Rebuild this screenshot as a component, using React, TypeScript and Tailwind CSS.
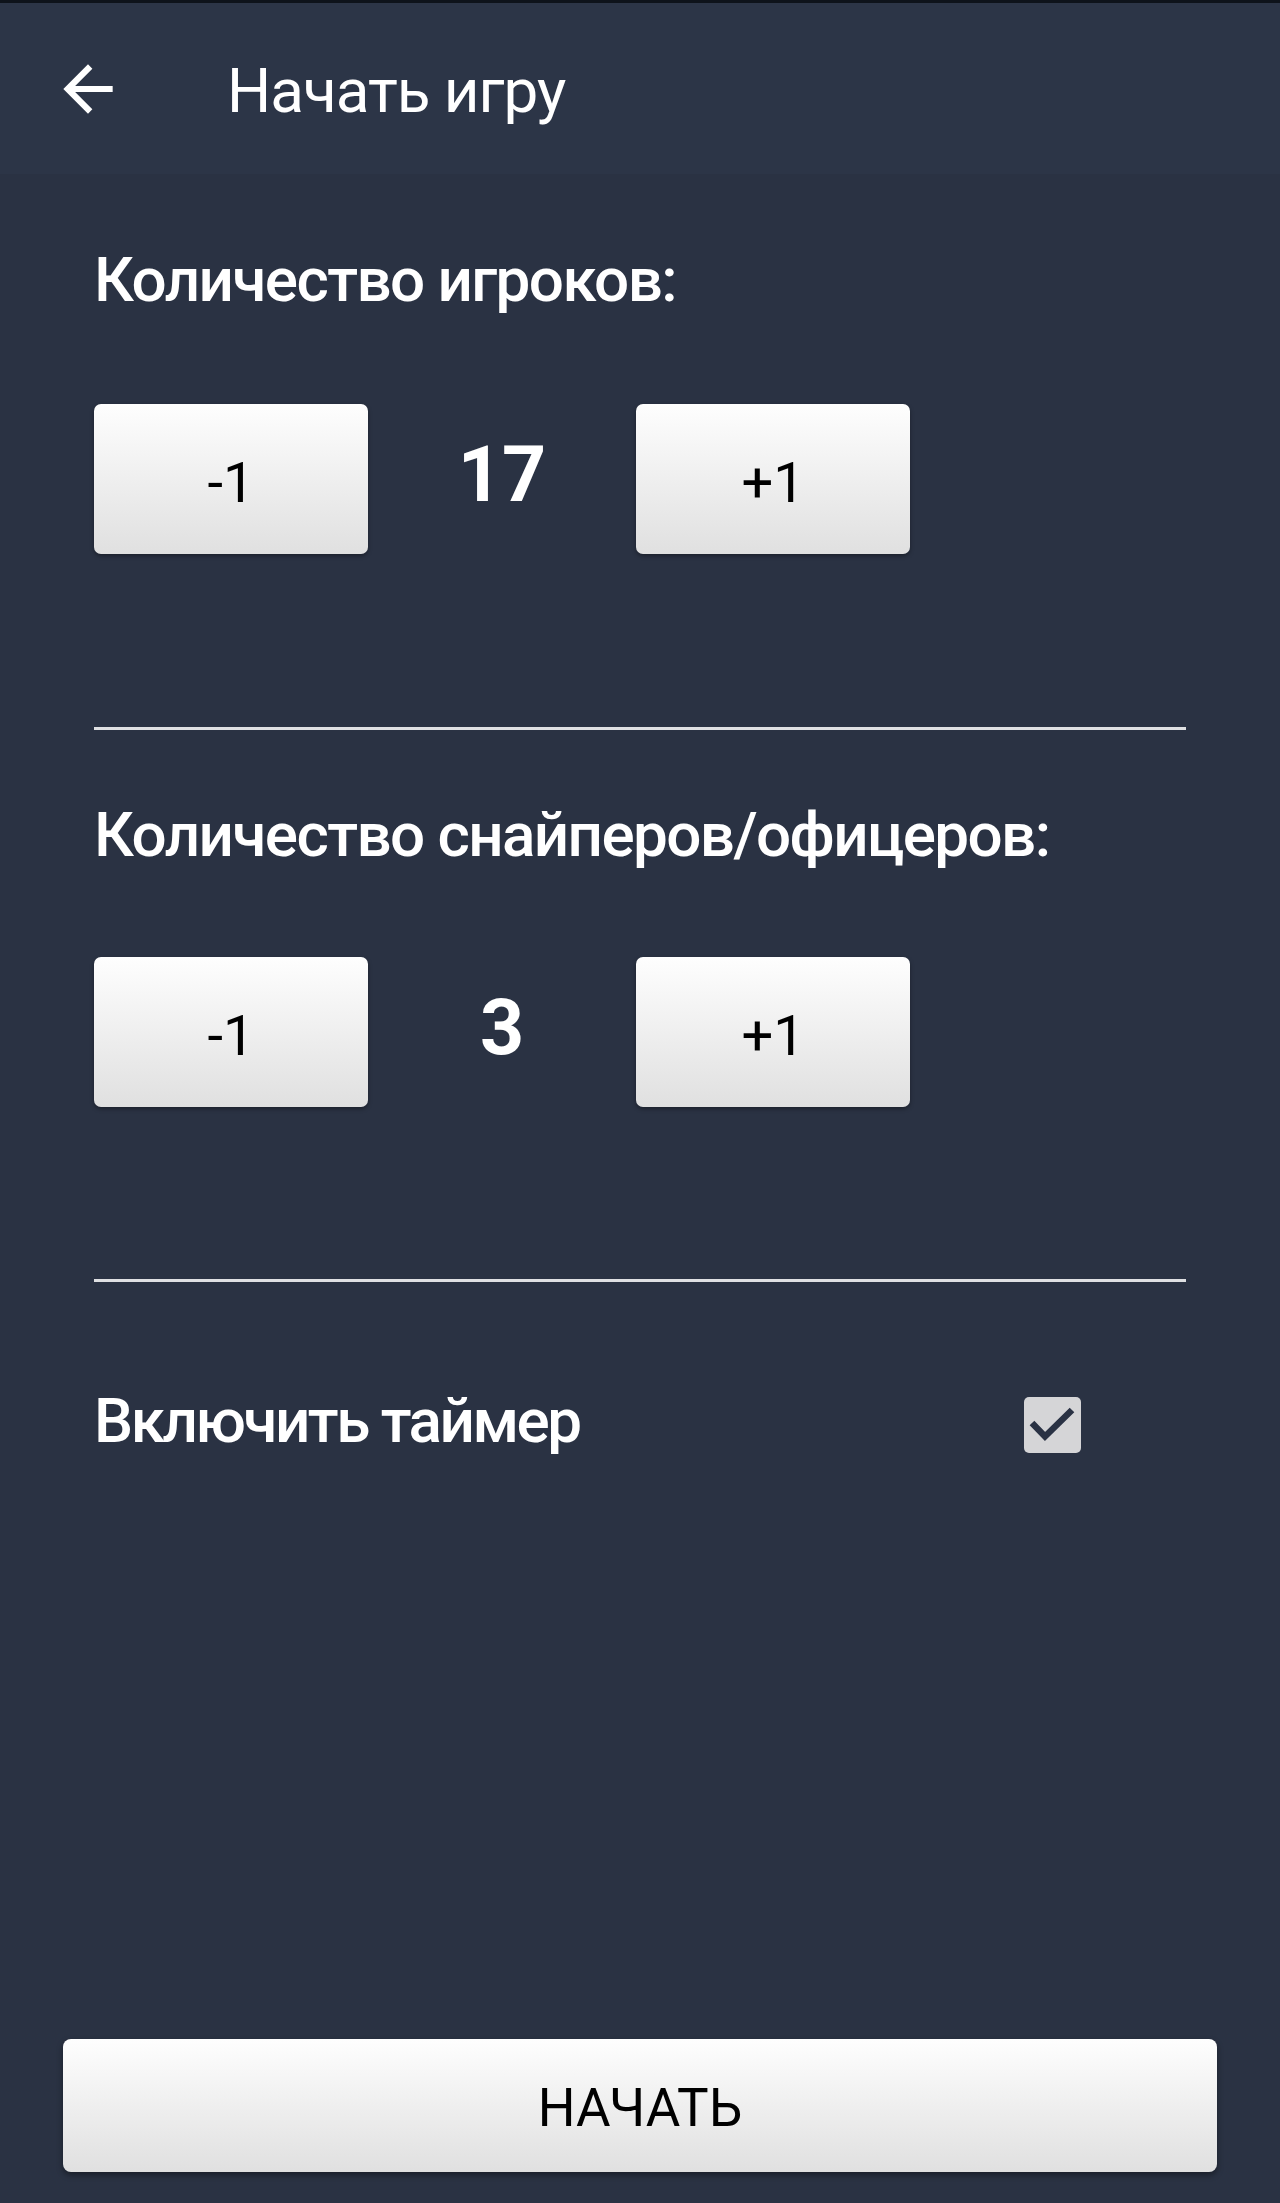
import React, { useState } from 'react';

const font = { fontFamily: 'Roboto, "Noto Sans", sans-serif' };

const BackArrow: React.FC = () => (
  <svg width="74" height="74" viewBox="0 0 24 24" fill="#ffffff">
    <path d="M20 11H7.83l5.59-5.59L12 4l-8 8 8 8 1.41-1.41L7.83 13H20v-2z" />
  </svg>
);

const StepButton: React.FC<{ label: string; onClick: () => void }> = ({ label, onClick }) => (
  <button
    onClick={onClick}
    className="w-[274px] h-[150px] rounded-[7px] bg-gradient-to-b from-[#fefefe] to-[#e0e0e0] shadow-[0_2px_4px_rgba(0,0,0,0.35)] flex items-center justify-center pt-[7px] text-[56px] leading-none text-black"
  >
    {label}
  </button>
);

const Counter: React.FC<{ value: number; onChange: (v: number) => void }> = ({ value, onChange }) => (
  <div className="flex items-center">
    <StepButton label="-1" onClick={() => onChange(Math.max(0, value - 1))} />
    <div className="w-[268px] text-center text-[77px] font-bold leading-none text-white -mt-[8px]">{value}</div>
    <StepButton label="+1" onClick={() => onChange(value + 1)} />
  </div>
);

export default function App() {
  const [players, setPlayers] = useState(17);
  const [snipers, setSnipers] = useState(3);
  const [timer, setTimer] = useState(true);

  return (
    <div style={font} className="w-[1280px] h-[2203px] flex flex-col bg-[#2a3243] overflow-hidden">
      {/* toolbar */}
      <header className="h-[174px] shrink-0 border-t-[3px] border-[#0e131b] bg-[#2c3547] flex items-start">
        <div className="ml-[51px] mt-[49px]">
          <BackArrow />
        </div>
        <h1 className="ml-[102px] mt-[57px] text-[62px] tracking-[-1px] leading-none text-white">Начать игру</h1>
      </header>

      <main className="px-[94px] flex flex-col">
        <p className="mt-[75px] text-[62px] font-medium tracking-[-1.6px] leading-none text-white">Количество игроков:</p>
        <div className="mt-[93px]">
          <Counter value={players} onChange={setPlayers} />
        </div>
        <div className="mt-[173px] h-[3px] bg-[#dfe0e3]" />

        <p className="mt-[74px] text-[62px] font-medium tracking-[-1.6px] leading-none text-white">Количество снайперов/офицеров:</p>
        <div className="mt-[91px]">
          <Counter value={snipers} onChange={setSnipers} />
        </div>
        <div className="mt-[172px] h-[3px] bg-[#dfe0e3]" />

        <div className="mt-[108px] flex items-start">
          <p className="text-[62px] font-medium tracking-[-2.5px] leading-none text-white">Включить таймер</p>
          <button
            onClick={() => setTimer(!timer)}
            className="ml-auto mr-[105px] mt-[7px] w-[57px] h-[56px] rounded-[5px] bg-[#d5d5d7] flex items-center justify-center"
          >
            {timer && (
              <svg width="57" height="56" viewBox="0 0 57 56">
                <path d="M8 26 L21 39.5 L48 13" fill="none" stroke="#2a3244" strokeWidth="6.5" />
              </svg>
            )}
          </button>
        </div>
      </main>

      <div className="flex-1" />

      <div className="px-[63px] pb-[31px]">
        <button className="w-full h-[133px] rounded-[8px] bg-gradient-to-b from-[#fefefe] to-[#e0e0e0] shadow-[0_3px_6px_rgba(0,0,0,0.4)] flex items-center justify-center pt-[6px] text-[53px] leading-none text-black">
          НАЧАТЬ
        </button>
      </div>
    </div>
  );
}
